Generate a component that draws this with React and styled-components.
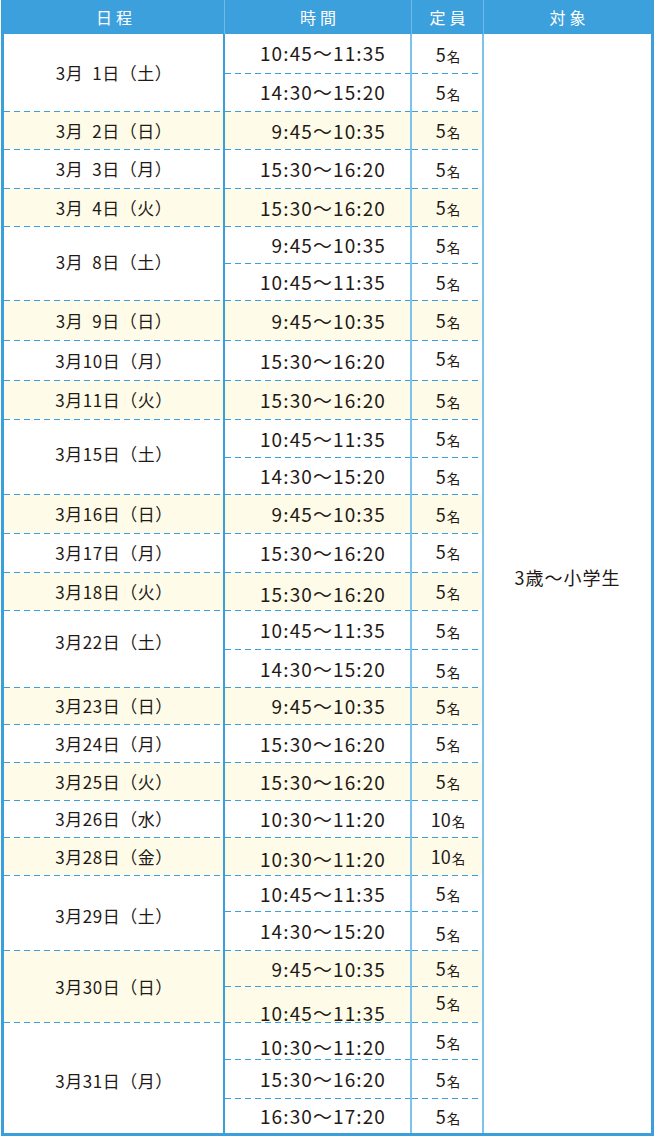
import React from 'react';
import styled, { createGlobalStyle, css } from 'styled-components';

const Global = createGlobalStyle`
  html, body { margin: 0; padding: 0; background: #ffffff; }
  body { font-family: "Noto Sans CJK JP", "Noto Sans", sans-serif; color: #231815; }
  *, *::before, *::after { box-sizing: border-box; }
`;

const BLUE = '#3b9fdc';
const LIGHT_LINE = '#7cc2eb';
const YELLOW = '#fefce8';

const schedule = [
  { date: '3月\u20021日（土）', slots: [['10:45〜11:35', '5', -1], ['14:30〜15:20', '5', -1]] },
  { date: '3月\u20022日（日）', alt: true, slots: [['9:45〜10:35', '5']] },
  { date: '3月\u20023日（月）', slots: [['15:30〜16:20', '5']] },
  { date: '3月\u20024日（火）', alt: true, slots: [['15:30〜16:20', '5']] },
  { date: '3月\u20028日（土）', shift: -2, slots: [['9:45〜10:35', '5'], ['10:45〜11:35', '5']] },
  { date: '3月\u20029日（日）', alt: true, slots: [['9:45〜10:35', '5']] },
  { date: '3月10日（月）', slots: [['15:30〜16:20', '5', 0, -2]] },
  { date: '3月11日（火）', alt: true, slots: [['15:30〜16:20', '5']] },
  { date: '3月15日（土）', shift: -3, slots: [['10:45〜11:35', '5'], ['14:30〜15:20', '5']] },
  { date: '3月16日（日）', alt: true, slots: [['9:45〜10:35', '5']] },
  { date: '3月17日（月）', slots: [['15:30〜16:20', '5', 0, -2]] },
  { date: '3月18日（火）', alt: true, slots: [['15:30〜16:20', '5', 2, 0]] },
  { date: '3月22日（土）', shift: -7, slots: [['10:45〜11:35', '5'], ['14:30〜15:20', '5', 0, 2]] },
  { date: '3月23日（日）', alt: true, slots: [['9:45〜10:35', '5']] },
  { date: '3月24日（月）', slots: [['15:30〜16:20', '5']] },
  { date: '3月25日（火）', alt: true, slots: [['15:30〜16:20', '5']] },
  { date: '3月26日（水）', slots: [['10:30〜11:20', '10']] },
  { date: '3月28日（金）', alt: true, slots: [['10:30〜11:20', '10', 2, 0]] },
  { date: '3月29日（土）', shift: 3, slots: [['10:45〜11:35', '5'], ['14:30〜15:20', '5', 0, 2]] },
  { date: '3月30日（日）', alt: true, slots: [['9:45〜10:35', '5'], ['10:45〜11:35', '5', 8, -2]] },
  { date: '3月31日（月）', shift: 3, slots: [['10:30〜11:20', '5', 6, 0], ['15:30〜16:20', '5'], ['16:30〜17:20', '5']] },
];

const slotHeights = [
  39, 38, 38, 39, 38, 37, 37, 40, 40, 39, 38, 37, 39, 39, 38,
  39, 38, 37, 38, 38, 37, 38, 36, 39, 36, 36, 37, 39, 35,
];

const Page = styled.div`
  padding-left: 1px;
`;

const Table = styled.div`
  display: grid;
  width: 653px;
  grid-template-columns: 221px 187px 72px 167px;
  grid-template-rows: ${(p) => p.$rows};
  border: 3px solid ${BLUE};
  border-top: none;
  background: #ffffff;
`;

const HeaderCell = styled.div`
  grid-row: 1;
  grid-column: ${(p) => p.$col};
  display: flex;
  align-items: center;
  justify-content: center;
  background: #3ca0dc;
  color: #ffffff;
  font-size: 16px;
  letter-spacing: 4px;
  padding-left: 4px;
  border-right: ${(p) => (p.$last ? 'none' : '1px solid rgba(255, 255, 255, 0.28)')};
`;

const Cell = styled.div`
  grid-row: ${(p) => p.$row} / span ${(p) => p.$span || 1};
  display: flex;
  align-items: center;
  justify-content: center;
  background-color: ${(p) => (p.$alt ? YELLOW : '#ffffff')};
  ${(p) =>
    p.$dashed &&
    css`
      background-image: linear-gradient(90deg, ${BLUE} 0 6px, transparent 6px 10px);
      background-size: 10px 1px;
      background-repeat: repeat-x;
      background-position: 0 0;
    `}
`;

const DateCell = styled(Cell)`
  grid-column: 1;
  border-right: 2px solid ${BLUE};
  font-size: 17px;
  letter-spacing: 0.5px;
  padding-left: 1px;
`;

const TimeCell = styled(Cell)`
  grid-column: 2;
  justify-content: flex-end;
  padding-right: 24px;
  border-right: 2px solid ${LIGHT_LINE};
  font-size: 19px;
  letter-spacing: 1.1px;
`;

const CapCell = styled(Cell)`
  grid-column: 3;
  border-right: 2px solid ${LIGHT_LINE};
  padding-left: 2px;
`;

const TargetCell = styled(Cell)`
  grid-column: 4;
  font-size: 18px;
  letter-spacing: 1px;
  padding-bottom: 14px;
`;

const Text = styled.span`
  display: inline-block;
  transform: translateY(${(p) => p.$shift || 0}px);
`;

const Num = styled.span`
  font-size: 18px;
`;

const Unit = styled.span`
  font-size: 13.5px;
  margin-left: 1px;
`;

export default function App() {
  const rowsTemplate = ['34px', ...slotHeights.map((h) => `${h}px`)].join(' ');
  const cells = [];
  let row = 2;
  schedule.forEach((d, i) => {
    const start = row;
    cells.push(
      <DateCell key={`d${i}`} $row={start} $span={d.slots.length} $alt={d.alt} $dashed={start > 2}>
        <Text $shift={d.shift}>{d.date}</Text>
      </DateCell>
    );
    d.slots.forEach(([time, cap, tShift, cShift], j) => {
      const r = start + j;
      cells.push(
        <TimeCell key={`t${i}-${j}`} $row={r} $alt={d.alt} $dashed={r > 2}>
          <Text $shift={tShift}>{time}</Text>
        </TimeCell>,
        <CapCell key={`c${i}-${j}`} $row={r} $alt={d.alt} $dashed={r > 2}>
          <Text $shift={cShift}>
            <Num>{cap}</Num>
            <Unit>名</Unit>
          </Text>
        </CapCell>
      );
    });
    row += d.slots.length;
  });

  return (
    <Page>
      <Global />
      <Table $rows={rowsTemplate}>
        <HeaderCell $col={1}>日程</HeaderCell>
        <HeaderCell $col={2}>時間</HeaderCell>
        <HeaderCell $col={3}>定員</HeaderCell>
        <HeaderCell $col={4} $last>対象</HeaderCell>
        {cells}
        <TargetCell $row={2} $span={slotHeights.length}>3歳〜小学生</TargetCell>
      </Table>
    </Page>
  );
}
